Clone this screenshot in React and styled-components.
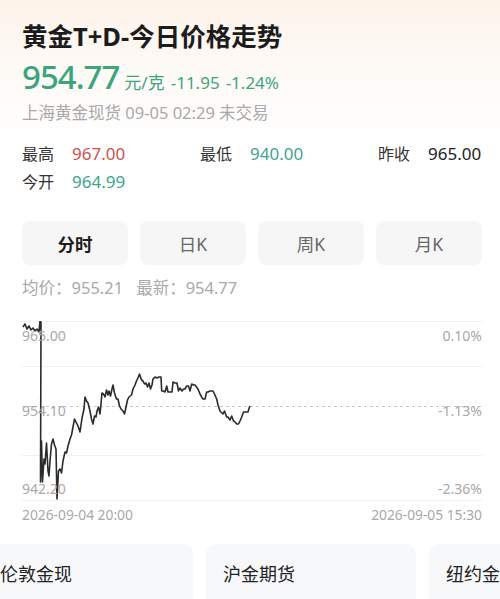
import React from "react";
import styled, { createGlobalStyle } from "styled-components";

const GlobalStyle = createGlobalStyle`
  body {
    margin: 0;
    background: #fff;
    font-family: "Noto Sans", "Noto Sans CJK SC", sans-serif;
  }
`;

// screen points traced from the day's ticks (x, y in chart space)
const ticks = [
  [1, 6], [3, 3], [5, 8], [7, 5], [9, 9], [11, 7], [13, 10], [15, 8], [17, 11],
  [18, 0], [18.5, 8], [19, 1], [18.5, 161], [19.5, 120], [20.5, 161], [22, 138],
  [23, 143], [24.5, 122], [26, 150], [27, 155], [28, 140], [29.5, 123], [31, 118],
  [32.5, 124], [34, 128], [35, 178], [36.5, 150], [38, 148], [39.5, 152], [41, 140],
  [43, 131], [44.5, 132], [46, 125], [48, 118], [49.5, 114], [51, 106], [52.5, 98],
  [54.5, 102], [56, 105], [58, 111], [60, 97], [62, 88], [63, 76], [64.5, 80],
  [66, 82], [68, 90], [69.5, 98], [71, 103], [72.5, 95], [74, 96], [75, 90],
  [76.5, 86], [78, 93], [79, 83], [80, 72], [81.5, 73], [83, 76], [84.5, 69],
  [86, 74], [87, 70], [88.5, 75], [90, 68], [91, 64], [92.5, 72], [94.5, 78],
  [96, 78], [97.5, 85], [99, 88], [101, 90], [102.5, 93], [104, 86], [105.5, 79],
  [107, 76], [109.5, 74], [111, 68], [113, 64], [114.5, 60], [116, 57], [117.5, 53],
  [119.5, 59], [121, 60], [122.5, 63], [124, 62], [125.5, 66], [127, 62], [128.5, 68],
  [130, 64], [131, 58], [133, 56], [135, 57], [137, 56], [139, 56], [139.7, 70],
  [141.5, 70], [143, 71], [144.7, 65], [146, 71], [148, 71], [150, 71], [151, 61],
  [153, 62], [155, 62], [156.5, 70], [158, 67], [160, 70], [161.5, 68], [163, 68],
  [164.7, 65], [166.5, 65], [168, 70], [169.7, 63], [171.5, 64], [173, 64],
  [174.5, 66], [176, 68], [178, 73], [179.7, 76], [181, 78], [183, 78], [184.7, 71],
  [186, 71], [188, 70], [191, 70], [192.5, 73], [194.7, 78], [196, 84], [198, 90],
  [201, 93], [202.5, 90], [204.7, 96], [206, 96], [208, 99], [209.7, 95], [211.5, 100],
  [213, 101], [214.7, 103], [216.5, 103], [218, 100], [219.7, 96], [221.5, 91],
  [223, 91], [224.7, 91], [226, 91], [227.5, 86], [228, 85],
];

const tickPath = ticks.map(([x, y], i) => `${i ? "L" : "M"}${x} ${y}`).join(" ");

const stats = [
  { label: "最高", value: "967.00", tone: "up" },
  { label: "最低", value: "940.00", tone: "down" },
  { label: "昨收", value: "965.00", tone: "flat" },
  { label: "今开", value: "964.99", tone: "down" },
];

const tabs = ["分时", "日K", "周K", "月K"];

const markets = ["伦敦金现", "沪金期货", "纽约金现"];

const App = () => {
  return (
    <Page>
      <GlobalStyle />
      <Main>
        <Title>黄金T+D-今日价格走势</Title>
        <PriceRow>
          <Price>954.77</Price>
          <PriceUnit>元/克</PriceUnit>
          <PriceChange>-11.95</PriceChange>
          <PriceChange>-1.24%</PriceChange>
        </PriceRow>
        <Meta>上海黄金现货 09-05 02:29 未交易</Meta>

        <StatsGrid>
          {stats.map((s) => (
            <Stat key={s.label}>
              <StatLabel>{s.label}</StatLabel>
              <StatValue $tone={s.tone}>{s.value}</StatValue>
            </Stat>
          ))}
        </StatsGrid>

        <TabBar>
          {tabs.map((t, i) => (
            <Tab key={t} $active={i === 0}>{t}</Tab>
          ))}
        </TabBar>

        <AvgLine>
          <span>均价：955.21</span>
          <span>最新：954.77</span>
        </AvgLine>

        <ChartBox>
          <svg width="460" height="180" viewBox="0 0 460 180">
            <line x1="0" y1="0.5" x2="460" y2="0.5" stroke="#f1f1f1" />
            <line x1="0" y1="45.5" x2="460" y2="45.5" stroke="#f1f1f1" />
            <line x1="0" y1="85.5" x2="460" y2="85.5" stroke="#c8c8c8" strokeDasharray="3 3" />
            <line x1="0" y1="134.5" x2="460" y2="134.5" stroke="#f1f1f1" />
            <line x1="0" y1="179.5" x2="460" y2="179.5" stroke="#f1f1f1" />
            <path d={tickPath} fill="none" stroke="#2b2b2b" strokeWidth="1.6" strokeLinejoin="round" />
          </svg>
          <AxisLabel $top={6}>965.00</AxisLabel>
          <AxisLabel $top={6} $right>0.10%</AxisLabel>
          <AxisLabel $top={81}>954.10</AxisLabel>
          <AxisLabel $top={81} $right>-1.13%</AxisLabel>
          <AxisLabel $top={159}>942.20</AxisLabel>
          <AxisLabel $top={159} $right>-2.36%</AxisLabel>
        </ChartBox>

        <DateRow>
          <span>2026-09-04 20:00</span>
          <span>2026-09-05 15:30</span>
        </DateRow>
      </Main>

      <CardStrip>
        {markets.map((m) => (
          <MarketCard key={m}>{m}</MarketCard>
        ))}
      </CardStrip>
    </Page>
  );
};

export default App;

const Page = styled.div`
  width: 500px;
  height: 599px;
  overflow: hidden;
  background: linear-gradient(180deg, #fdf3ea 0px, #fefaf6 70px, #ffffff 140px);
`;

const Main = styled.div`
  padding: 20px 18px 0 22px;
`;

const Title = styled.h1`
  margin: 0;
  font-size: 25.5px;
  line-height: 32px;
  font-weight: 700;
  color: #1c1c1c;
`;

const PriceRow = styled.div`
  display: flex;
  align-items: baseline;
  margin-top: 5px;
  height: 40px;
  color: #3da57d;
`;

const Price = styled.span`
  font-size: 33px;
  line-height: 40px;
  font-weight: 500;
  letter-spacing: -1px;
`;

const PriceUnit = styled.span`
  font-size: 17px;
  margin-left: 5px;
`;

const PriceChange = styled.span`
  font-size: 17px;
  margin-left: 6px;
`;

const Meta = styled.div`
  margin-top: 5px;
  font-size: 16.5px;
  line-height: 22px;
  color: #a9a9a9;
`;

const StatsGrid = styled.div`
  display: grid;
  grid-template-columns: 178px 178px 1fr;
  margin-top: 15px;
`;

const Stat = styled.div`
  display: flex;
  align-items: center;
  gap: 18px;
  height: 28px;
  font-size: 16px;
`;

const StatLabel = styled.span`
  color: #333;
`;

const toneColor = {
  up: "#c9544e",
  down: "#3da58b",
  flat: "#222",
};

const StatValue = styled.span`
  color: ${(p) => toneColor[p.$tone]};
  font-size: 17px;
`;

const TabBar = styled.div`
  display: grid;
  grid-template-columns: repeat(4, 1fr);
  gap: 12px;
  margin-top: 26px;
`;

const Tab = styled.div`
  height: 44px;
  display: flex;
  align-items: center;
  justify-content: center;
  background: #f6f6f6;
  border-radius: 8px;
  font-size: 17.5px;
  font-weight: ${(p) => (p.$active ? 700 : 400)};
  color: ${(p) => (p.$active ? "#1c1c1c" : "#666")};
`;

const AvgLine = styled.div`
  display: flex;
  gap: 13px;
  margin-top: 12px;
  font-size: 16.5px;
  line-height: 22px;
  color: #a9a9a9;
`;

const ChartBox = styled.div`
  position: relative;
  width: 460px;
  height: 180px;
  margin-top: 22px;

  svg {
    display: block;
  }
`;

const AxisLabel = styled.span`
  position: absolute;
  top: ${(p) => p.$top}px;
  ${(p) => (p.$right ? "right: 0;" : "left: 0;")}
  font-size: 14px;
  line-height: 17px;
  color: #a8a8a8;
`;

const DateRow = styled.div`
  display: flex;
  justify-content: space-between;
  margin-top: 6px;
  font-size: 13.8px;
  line-height: 16px;
  color: #a8a8a8;
`;

const CardStrip = styled.div`
  display: flex;
  gap: 13px;
  margin-top: 21px;
  margin-left: -17px;
`;

const MarketCard = styled.div`
  flex: 0 0 210px;
  height: 80px;
  box-sizing: border-box;
  padding: 17px 0 0 17px;
  background: #f7f8fa;
  border-radius: 10px;
  font-size: 18px;
  line-height: 26px;
  color: #222;
  white-space: nowrap;
  overflow: hidden;
`;
